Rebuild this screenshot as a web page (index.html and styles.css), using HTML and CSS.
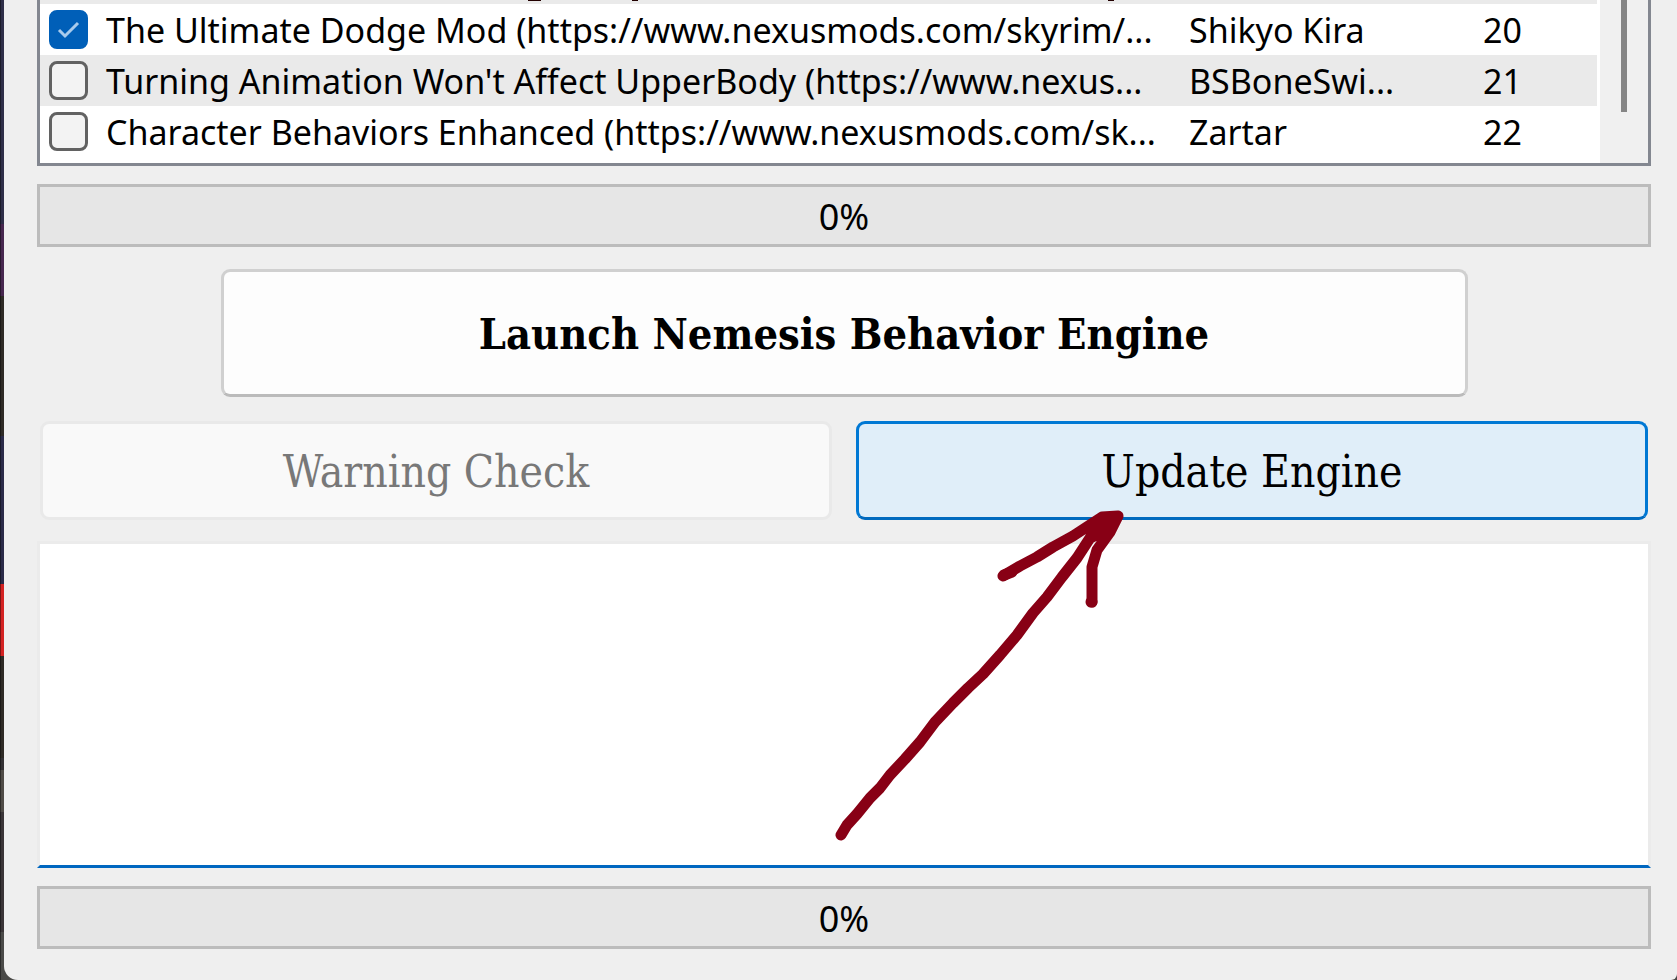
FILE: index.html
```html
<!DOCTYPE html>
<html lang="en">
<head>
<meta charset="utf-8">
<title>Nemesis Behavior Engine</title>
<link rel="stylesheet" href="styles.css">
</head>
<body>
<main class="window">
  <div class="mod-list">
    <table class="mods">
      <colgroup><col><col class="col-author"><col class="col-priority"></colgroup>
      <tbody>
        <tr class="row-cut"><td colspan="3"><svg width="1080" height="4" aria-hidden="true"><path d="M488 0H501M592 0H598M1068 0H1074" stroke="#200" stroke-width="2"/></svg></td></tr>
        <tr>
          <td><label class="mod"><span class="tick"><input type="checkbox" checked><svg viewBox="0 0 39 39" aria-hidden="true"><path d="M10 20L16 26L29 13" fill="none" stroke="#a9cbec" stroke-width="3"/></svg></span>The Ultimate Dodge Mod (https://www.nexusmods.com/skyrim/...</label></td>
          <td>Shikyo Kira</td><td>20</td>
        </tr>
        <tr class="alt">
          <td><label class="mod"><span class="tick"><input type="checkbox"></span>Turning Animation Won't Affect UpperBody (https://www.nexus...</label></td>
          <td>BSBoneSwi...</td><td>21</td>
        </tr>
        <tr>
          <td><label class="mod"><span class="tick"><input type="checkbox"></span>Character Behaviors Enhanced (https://www.nexusmods.com/sk...</label></td>
          <td>Zartar</td><td>22</td>
        </tr>
      </tbody>
    </table>
    <div class="scrollbar"><div class="thumb"></div></div>
  </div>
  <div class="progress" role="progressbar" aria-label="Mod progress" aria-valuenow="0">0%</div>
  <button class="btn launch" type="button">Launch Nemesis Behavior Engine</button>
  <div class="actions">
    <button class="btn" type="button" disabled>Warning Check</button>
    <button class="btn update" type="button">Update Engine</button>
  </div>
  <textarea class="log" aria-label="Engine log"></textarea>
  <div class="progress" role="progressbar" aria-label="Engine progress" aria-valuenow="0">0%</div>
</main>
<svg class="arrow" width="290" height="340" viewBox="834 506 290 340" aria-hidden="true">
  <path d="M841 835L847 825L857 814L870 798L880 788L890 775L905 759L920 742L935 722L953 703L968 688L983 674L1000 655L1017 635L1033 613L1047 597L1062 577L1077 558L1090 538L1118 516M1003 576L1020 566L1037 557L1053 547L1073 536L1102 517L1118 516L1110 532L1097 550L1092 567V602M1090 538L1102 517L1110 528Z"/>
  <path d="M1004 575L1012 572M1092 602H1091"/>
</svg>
</body>
</html>
```
FILE: styles.css
```css
* { box-sizing: border-box; }
body {
  margin: 0;
  padding-left: 4px;
  position: relative;
  font: 34px/48px "Noto Sans", "Open Sans", sans-serif;
  color: #000;
  background: linear-gradient(#2e2e48 0 224px, #47274f 224px 296px, #2e2a26 296px 436px, #2a2a48 436px 584px, #d42222 584px 656px, #2e2a26 656px 758px, #333134 758px 770px, #4f4b47 770px 812px, #3a3538 812px 932px, #4a4a48 932px);
  box-shadow: inset 1px 0 rgba(0, 0, 0, 0.4);
}
.window {
  display: flex;
  flex-direction: column;
  min-height: 100vh;
  padding: 0 26px 31px 33px;
  background: #efefef;
  border-radius: 0 0 6px 14px;
}
.mod-list {
  display: flex;
  border: 3px solid #838790;
  border-top: 0;
  background: #fff;
  margin-bottom: 18px;
}
.mods {
  flex: 1;
  table-layout: fixed;
  border-collapse: collapse;
  margin-right: 3px;
  margin-bottom: 6px;
}
.col-author { width: 294px; }
.col-priority { width: 114px; }
.mods td { padding: 0; height: 51px; white-space: nowrap; }
.mods .row-cut td { height: 4px; line-height: 0; }
.row-cut svg { display: block; }
.row-cut, .alt { background: #eaeaea; }
.mod { display: flex; align-items: center; gap: 18px; padding-left: 9px; }
.tick { display: grid; }
.tick > * { grid-area: 1 / 1; width: 39px; height: 39px; margin: 0; }
.tick input {
  appearance: none;
  border: 3px solid #626262;
  border-radius: 8px;
  background: #f3f3f3;
}
.tick input:checked { background: #005fb8; border-color: #005fb8; }
.scrollbar { width: 48px; background: #f0f0f0; padding-left: 21px; }
.thumb { width: 6px; height: 112px; background: #858585; }
.progress {
  height: 63px;
  border: 3px solid #bcbcbc;
  background: #e6e6e6;
  font-size: 36px;
  line-height: 60px;
  text-align: center;
}
.btn {
  font: 44px/48px "DejaVu Serif Condensed", "DejaVu Serif", serif;
  color: #000;
  background: #fdfdfd;
  border: 3px solid #d0d0d0;
  border-radius: 9px;
  padding: 24px 0 21px;
}
.launch {
  width: 1247px;
  max-width: 100%;
  align-self: center;
  margin: 22px 0 24px;
  padding: 38px 0 36px;
  font-size: 43px;
  font-weight: bold;
  border-bottom-color: #bbb;
}
.actions {
  display: grid;
  grid-template-columns: 1fr 1fr;
  gap: 24px;
  padding: 0 3px;
}
.btn:disabled { color: #787878; background: #f9f9f9; border-color: #e9e9e9; }
.update { background: #e0eef9; border-color: #0078d4; border-bottom-color: #006abf; }
.log {
  flex: 1;
  min-height: 200px;
  margin: 21px 0 18px;
  border: 3px solid #ebebeb;
  border-bottom-color: #0067c0;
  background: #fff;
  font: inherit;
  resize: none;
}
.arrow {
  position: absolute;
  left: 834px;
  top: 506px;
  fill: none;
  stroke: #880015;
  stroke-width: 11px;
  stroke-linecap: round;
  stroke-linejoin: round;
}
```
